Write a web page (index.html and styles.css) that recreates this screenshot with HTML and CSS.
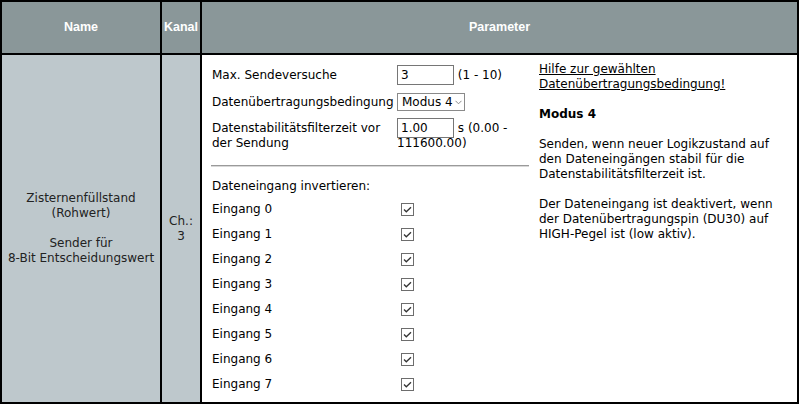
FILE: index.html
```html
<!DOCTYPE html>
<html lang="de">
<head>
  <meta charset="UTF-8">
  <meta name="viewport" content="width=device-width, initial-scale=1.0">
  <title>Parameter</title>
  <link rel="stylesheet" href="styles.css">
</head>
<body>

  <div class="tabelle">
    <!-- Kopfzeile -->
    <div class="kopf">Name</div>
    <div class="kopf">Kanal</div>
    <div class="kopf">Parameter</div>

    <div class="seite">Zisternenfüllstand<br>(Rohwert)<br><br>Sender für<br>8-Bit Entscheidungswert</div>
    <div class="seite">Ch.:<br>3</div>

    <div class="parameter">
      <div class="formular">
        <div class="zeile">
          <label class="beschriftung">Max. Sendeversuche</label>
          <div class="wert"><input class="feld" type="text" value="3"> (1 - 10)</div>
        </div>
        <div class="zeile zeile-auswahl">
          <label class="beschriftung">Datenübertragungsbedingung</label>
          <div class="wert">
            <span class="auswahl-box">
              <select class="auswahl">
                <option>Modus 4</option>
              </select>
              <svg class="pfeil" width="7" height="5" viewBox="0 0 7 5"><polyline points="0.5,0.8 3.5,3.8 6.5,0.8" fill="none" stroke="#8a8a8a" stroke-width="1"/></svg>
            </span>
          </div>
        </div>
        <div class="zeile zeile-filter">
          <label class="beschriftung">Datenstabilitätsfilterzeit vor der Sendung</label>
          <div class="wert"><input class="feld" type="text" value="1.00"> s (0.00 - 111600.00)</div>
        </div>

        <hr class="trenner">

        <div class="titel">Dateneingang invertieren:</div>
        <div class="eingaenge">
          <label class="eingang"><span class="beschriftung">Eingang 0</span><span class="kasten"><svg width="13" height="13" viewBox="0 0 13 13"><rect x="0.5" y="0.5" width="12" height="12" fill="#fff" stroke="#6d6d6d"/><polyline points="3,6.5 5.3,8.8 10,4.2" fill="none" stroke="#333" stroke-width="1.3"/></svg></span></label>
          <label class="eingang"><span class="beschriftung">Eingang 1</span><span class="kasten"><svg width="13" height="13" viewBox="0 0 13 13"><rect x="0.5" y="0.5" width="12" height="12" fill="#fff" stroke="#6d6d6d"/><polyline points="3,6.5 5.3,8.8 10,4.2" fill="none" stroke="#333" stroke-width="1.3"/></svg></span></label>
          <label class="eingang"><span class="beschriftung">Eingang 2</span><span class="kasten"><svg width="13" height="13" viewBox="0 0 13 13"><rect x="0.5" y="0.5" width="12" height="12" fill="#fff" stroke="#6d6d6d"/><polyline points="3,6.5 5.3,8.8 10,4.2" fill="none" stroke="#333" stroke-width="1.3"/></svg></span></label>
          <label class="eingang"><span class="beschriftung">Eingang 3</span><span class="kasten"><svg width="13" height="13" viewBox="0 0 13 13"><rect x="0.5" y="0.5" width="12" height="12" fill="#fff" stroke="#6d6d6d"/><polyline points="3,6.5 5.3,8.8 10,4.2" fill="none" stroke="#333" stroke-width="1.3"/></svg></span></label>
          <label class="eingang"><span class="beschriftung">Eingang 4</span><span class="kasten"><svg width="13" height="13" viewBox="0 0 13 13"><rect x="0.5" y="0.5" width="12" height="12" fill="#fff" stroke="#6d6d6d"/><polyline points="3,6.5 5.3,8.8 10,4.2" fill="none" stroke="#333" stroke-width="1.3"/></svg></span></label>
          <label class="eingang"><span class="beschriftung">Eingang 5</span><span class="kasten"><svg width="13" height="13" viewBox="0 0 13 13"><rect x="0.5" y="0.5" width="12" height="12" fill="#fff" stroke="#6d6d6d"/><polyline points="3,6.5 5.3,8.8 10,4.2" fill="none" stroke="#333" stroke-width="1.3"/></svg></span></label>
          <label class="eingang"><span class="beschriftung">Eingang 6</span><span class="kasten"><svg width="13" height="13" viewBox="0 0 13 13"><rect x="0.5" y="0.5" width="12" height="12" fill="#fff" stroke="#6d6d6d"/><polyline points="3,6.5 5.3,8.8 10,4.2" fill="none" stroke="#333" stroke-width="1.3"/></svg></span></label>
          <label class="eingang"><span class="beschriftung">Eingang 7</span><span class="kasten"><svg width="13" height="13" viewBox="0 0 13 13"><rect x="0.5" y="0.5" width="12" height="12" fill="#fff" stroke="#6d6d6d"/><polyline points="3,6.5 5.3,8.8 10,4.2" fill="none" stroke="#333" stroke-width="1.3"/></svg></span></label>
        </div>
      </div>

      <!-- Hilfetext zur Bedingung -->
      <div class="hilfe">
        <a href="#">Hilfe zur gewählten Datenübertragungsbedingung!</a>
        <p class="modus">Modus 4</p>
        <p>Senden, wenn neuer Logikzustand auf den Dateneingängen stabil für die Datenstabilitätsfilterzeit ist.</p>
        <p>Der Dateneingang ist deaktivert, wenn der Datenübertragungspin (DU30) auf HIGH-Pegel ist (low aktiv).</p>
      </div>
    </div>
  </div>

</body>
</html>
```

FILE: styles.css
```css
* {
  margin: 0;
  padding: 0;
  box-sizing: border-box;
}

body {
  font-family: "DejaVu Sans", Verdana, sans-serif;
  font-size: 12px;
  line-height: 15px;
  color: #000;
  background-color: #fff;
}

/* Tabelle mit schwarzen Linien */
.tabelle {
  display: grid;
  grid-template-columns: 158px 38px 1fr;
  grid-template-rows: 51px 347px;
  gap: 2px;
  padding: 2px;
  width: 799px;
  height: 404px;
  background-color: #000;
}

.kopf {
  display: flex;
  align-items: center;
  justify-content: center;
  background-color: #8a9799;
  color: #fff;
  font-family: "Liberation Sans", Arial, sans-serif;
  font-size: 12.5px;
  font-weight: bold;
}

.seite {
  display: flex;
  align-items: center;
  justify-content: center;
  text-align: center;
  background-color: #bec8cc;
  color: #222;
}

.parameter {
  display: flex;
  padding-left: 9px;
  background-color: #fff;
}

/* Linke Spalte mit Feldern */
.formular {
  width: 318px;
  padding-top: 10px;
}

.zeile {
  display: flex;
  align-items: flex-start;
}

.beschriftung {
  width: 186px;
  padding-left: 1px;
  padding-top: 3px;
  flex-shrink: 0;
}

.wert {
  flex: 1;
  padding-top: 3px;
}

.feld {
  width: 57px;
  height: 20px;
  margin: -3px 0 -2px;
  vertical-align: top;
  border: 1px solid #767676;
  padding: 0 3px;
  font: inherit;
  color: #000;
}

.zeile-auswahl {
  margin-top: 10px;
}

.zeile-auswahl .beschriftung,
.zeile-auswahl .wert {
  padding-top: 2px;
}

.zeile-filter {
  margin-top: 8px;
}

.auswahl-box {
  position: relative;
  display: inline-block;
  vertical-align: top;
  margin: -2px 0 -1px;
}

.auswahl {
  appearance: none;
  -webkit-appearance: none;
  display: block;
  width: 68px;
  height: 18px;
  border: 1px solid #8a8a8a;
  border-radius: 0;
  padding: 0 0 0 4px;
  background-color: #fff;
  font: inherit;
  color: #000;
}

.pfeil {
  position: absolute;
  right: 3px;
  top: 7px;
}

.trenner {
  height: 0;
  border: 0;
  border-top: 1px solid #9a9a9a;
  border-bottom: 1px solid #d8d8d8;
  margin-top: 14px;
}

.titel {
  margin-top: 12px;
  padding-left: 1px;
}

.eingaenge {
  margin-top: 3px;
}

.eingang {
  display: flex;
  align-items: center;
  height: 25px;
}

.eingang .beschriftung {
  padding-top: 0;
}

.kasten {
  display: flex;
  margin-left: 4px;
}

/* Rechte Spalte: Hilfe */
.hilfe {
  width: 245px;
  margin-left: 10px;
  padding-top: 7px;
}

.hilfe a {
  color: #000;
  text-decoration: underline;
}

.hilfe p {
  margin-top: 15px;
}

.hilfe .modus {
  font-weight: bold;
}
```
